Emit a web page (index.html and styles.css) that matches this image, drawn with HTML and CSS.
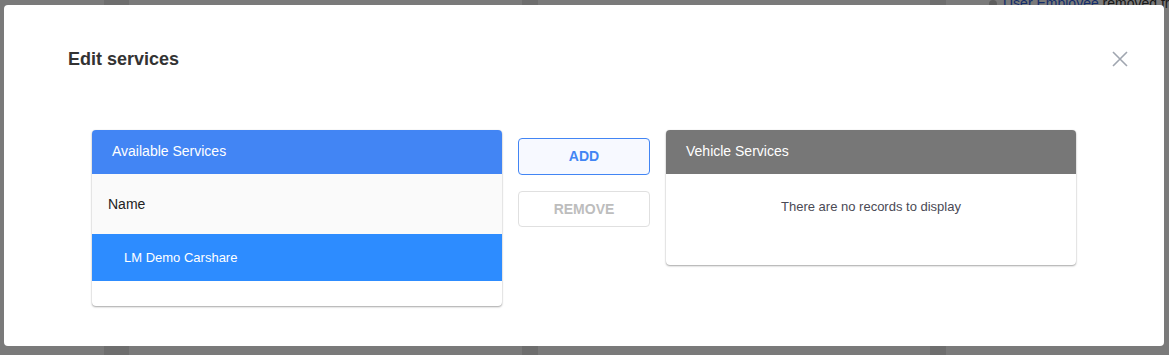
FILE: index.html
```html
<!DOCTYPE html>
<html lang="en">
<head>
    <meta charset="UTF-8">
    <meta name="viewport" content="width=device-width, initial-scale=1.0">
    <title>Edit services</title>
    <link rel="stylesheet" href="styles.css">
</head>
<body>
    <div class="page">
        <div class="col col-a"></div>
        <div class="col col-gap"></div>
        <div class="col col-b"></div>
        <div class="col col-gap2"></div>
        <div class="col col-c"></div>
        <div class="col col-gap3"></div>
        <div class="activity">
            <div class="feed-item"><span class="dot"></span><a>User Employee</a> removed from vehicle</div>
            <div class="feed-line">by Fleet Manager, Office</div>
            <div class="feed-line">Service: <a>Carshare</a></div>
            <div class="feed-line">Created: Ops Center</div>
            <div class="feed-line">,</div>
            <div class="feed-line"><a>Vehicle Model</a></div>
            <div class="feed-line">&nbsp;</div>
            <div class="feed-line">&nbsp;</div>
            <div class="feed-line">Info updated</div>
            <div class="feed-line">Record created</div>
            <div class="feed-line">&nbsp;</div>
            <div class="feed-line">Vendor</div>
            <div class="feed-line">Owner</div>
        </div>
    </div>

    <div class="overlay">
        <div class="modal">
            <div class="modal-header">
                <h2 class="modal-title">Edit services</h2>
                <button class="close-btn" aria-label="Close">
                    <svg width="16" height="16" viewBox="0 0 16 16">
                        <path d="M1 1 L15 15 M15 1 L1 15" stroke="#a0a6b0" stroke-width="1.6" fill="none"/>
                    </svg>
                </button>
            </div>
            <div class="transfer">
                <div class="panel">
                    <div class="panel-head panel-head-blue">Available Services</div>
                    <div class="table-head">Name</div>
                    <div class="table-row selected">LM Demo Carshare</div>
                    <div class="table-foot"></div>
                </div>
                <div class="actions">
                    <button class="btn btn-add">ADD</button>
                    <button class="btn btn-remove" disabled>REMOVE</button>
                </div>
                <div class="panel">
                    <div class="panel-head panel-head-gray">Vehicle Services</div>
                    <div class="empty">There are no records to display</div>
                </div>
            </div>
        </div>
    </div>
</body>
</html>
```

FILE: styles.css
```css
body {
    margin: 0;
    padding: 0;
    font-family: 'Liberation Sans', Arial, sans-serif;
    overflow: hidden;
    height: 355px;
}

/* page behind the dialog */
.page {
    display: flex;
    height: 355px;
    background: #f4f4f4;
}
.col {
    height: 100%;
}
.col-a { width: 104px; }
.col-gap { width: 25px; background: #dcdcdc; }
.col-b { width: 393px; }
.col-gap2 { width: 16px; background: #dcdcdc; }
.col-c { width: 392px; }
.col-gap3 { width: 16px; background: #dcdcdc; }
.activity {
    flex: 1;
    padding: 0 0 0 57px;
    margin-top: -6px;
    font-size: 14px;
    line-height: 19px;
    color: #333;
    white-space: nowrap;
    overflow: hidden;
}
.activity a {
    color: #2a5bd7;
}
.dot {
    display: inline-block;
    width: 8px;
    height: 8px;
    border-radius: 50%;
    background: #bbb;
    margin: 0 6px 0 -14px;
}

.overlay {
    position: fixed;
    inset: 0;
    background: rgba(0, 0, 0, 0.5);
    padding: 5px 5px 9px 4px;
    box-sizing: border-box;
}

.modal {
    background: #fff;
    border-radius: 4px;
    height: 100%;
    box-sizing: border-box;
    padding: 0 0 0 64px;
}
.modal-header {
    display: flex;
    justify-content: space-between;
    align-items: center;
    padding: 43px 36px 0 0;
}
.modal-title {
    margin: 0;
    font-size: 18px;
    font-weight: 700;
    color: #333;
    line-height: 22px;
}
.close-btn {
    background: none;
    border: none;
    padding: 0;
    width: 16px;
    height: 16px;
    cursor: pointer;
}
.close-btn svg {
    display: block;
}

.transfer {
    display: flex;
    align-items: flex-start;
    gap: 16px;
    margin: 60px 0 0 24px;
}
.panel {
    width: 410px;
    background: #fff;
    border-radius: 4px;
    overflow: hidden;
    box-shadow: 0 1px 2px rgba(0, 0, 0, 0.35), 0 0 1px rgba(0, 0, 0, 0.15);
}
.panel-head {
    height: 44px;
    line-height: 43px;
    padding-left: 20px;
    color: #fff;
    font-size: 14px;
}
.panel-head-blue { background: #4285f4; }
.panel-head-gray { background: #777777; }

.table-head {
    height: 60px;
    line-height: 60px;
    background: #fafafa;
    padding-left: 16px;
    font-size: 14px;
    color: #222;
}
.table-row {
    height: 47px;
    line-height: 47px;
    padding-left: 32px;
    font-size: 13px;
}
.table-row.selected {
    background: #2d8cff;
    color: #fff;
}
.table-foot {
    height: 25px;
}

.empty {
    height: 91px;
    padding-top: 25px;
    box-sizing: border-box;
    text-align: center;
    font-size: 13px;
    color: #4a4a55;
}

.actions {
    display: flex;
    flex-direction: column;
    gap: 16px;
    padding-top: 8px;
}
.btn {
    width: 132px;
    height: 37px;
    border-radius: 4px;
    font-family: 'Liberation Sans', Arial, sans-serif;
    font-size: 14px;
    font-weight: 700;
    cursor: pointer;
    padding: 0 0 1px;
}
.btn-add {
    background: #f7f9ff;
    border: 1px solid #4285f4;
    color: #4285f4;
}
.btn-remove {
    height: 36px;
    background: #fff;
    border: 1px solid #e0e0e0;
    color: #bdbdbd;
    cursor: default;
}
```
